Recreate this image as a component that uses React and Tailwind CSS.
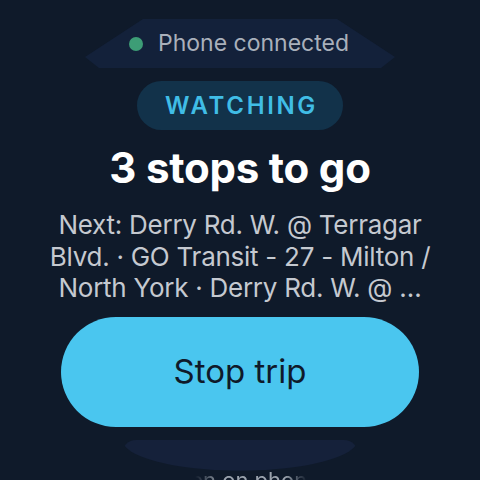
export default function App() {
  return (
    <div
      className="w-[480px] h-[480px] overflow-hidden bg-[#0f1a2a] flex flex-col items-center"
      style={{ fontFamily: 'Inter, Roboto, "Noto Sans", sans-serif' }}
    >
      {/* status chip, morphed at the top edge */}
      <div className="mt-[19px] shrink-0 w-[310px] h-[49px] bg-[#13213a] flex items-center justify-center gap-[15px] pr-[2px] [clip-path:polygon(58px_0,252px_0,310px_38px,296px_49px,14px_49px,0_38px)]">
        <span className="w-[14px] h-[14px] rounded-full bg-[#3d9d76]" />
        <span className="text-[23px] text-[#a9b0bb] leading-none">Phone connected</span>
      </div>

      <div className="mt-[13px] shrink-0 w-[206px] h-[49px] rounded-full bg-[#12324a] flex items-center justify-center">
        <span className="text-[24px] font-semibold tracking-[0.11em] text-[#40bde6] leading-none pl-[3px]">WATCHING</span>
      </div>

      <h1 className="mt-[16px] shrink-0 text-[42px] font-bold text-white leading-[44px] tracking-[-0.005em]">3 stops to go</h1>

      <p className="mt-[19px] shrink-0 w-[396px] text-center text-[26px] leading-[31.5px] tracking-[-0.01em] text-[#c5c9d0]">
        Next: Derry Rd. W. @ Terragar Blvd. · GO Transit - 27 - Milton / North York · Derry Rd. W. @ …
      </p>

      <button className="mt-[13px] shrink-0 w-[358px] h-[110px] rounded-full bg-[#4ac6ef] flex items-center justify-center">
        <span className="text-[33px] text-[#0f1a2a]">Stop trip</span>
      </button>

      {/* next chip, morphed at the bottom edge; its label fades out under it */}
      <div className="mt-[13px] shrink-0 relative w-[236px] h-[40px]">
        <span className="absolute left-1/2 top-[29px] -translate-x-1/2 whitespace-nowrap text-[22px] leading-none text-[#9aa2ad] [mask-image:linear-gradient(90deg,transparent_22%,black_38%,black_78%,transparent_92%)]">
          Open on phone
        </span>
        <div className="absolute left-0 right-0 top-0 h-[60px] bg-[#15213a] rounded-t-[14px] [clip-path:ellipse(50%_52%_at_50%_0%)]" />
      </div>
    </div>
  );
}
